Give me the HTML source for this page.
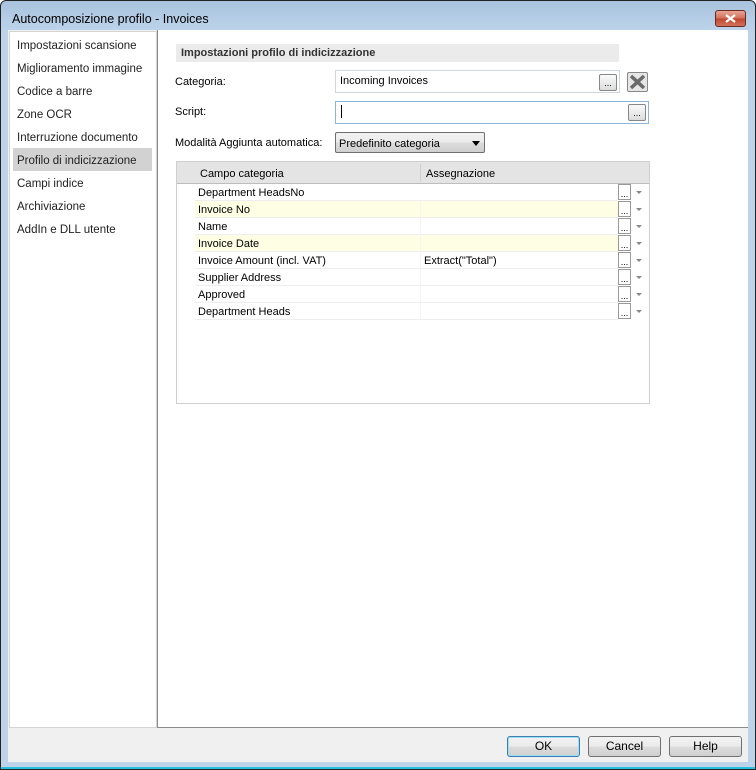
<!DOCTYPE html>
<html><head><style>
*{margin:0;padding:0;box-sizing:border-box}
body{width:756px;height:770px;background:#fff;font-family:"Liberation Sans",sans-serif;position:relative;overflow:hidden}
.a{position:absolute}
.win{left:0;top:0;width:756px;height:770px;border:1px solid #222;border-radius:6px 6px 0 0;background:linear-gradient(#a9c3de,#bcd3ea 30px,#bdd3ea)}
.t{font-size:12.5px;color:#000;white-space:nowrap;margin-top:1px}
.s{font-size:11px;color:#000;white-space:nowrap;margin-top:1px}
.li{left:17px;font-size:11.5px;color:#222;margin-top:2px}
.dots{border:1px solid #888;border-radius:2px;background:linear-gradient(#fafafa,#dcdcdc);font-size:9px;text-align:center;line-height:10px;color:#000}
.row{left:195px;width:423px;height:17px;border-bottom:1px solid #eee}
.rb{left:618px;width:13px;height:16px;border:1px solid #999;background:#fff;font-size:9px;text-align:center;line-height:18px}
.ar{left:636px;width:0;height:0;border-left:3px solid transparent;border-right:3px solid transparent;border-top:3px solid #888}
.btn{top:736px;height:21px;border:1px solid #707070;border-radius:3px;background:linear-gradient(#f2f2f2,#ebebeb 50%,#dddddd 50%,#cfcfcf);font-size:12px;text-align:center;line-height:19px}
</style></head><body>
<div class="a win"></div>
<div class="a t" style="left:12px;top:11px">Autocomposizione profilo - Invoices</div>
<div class="a" style="left:715px;top:10px;width:31px;height:17px;border:1px solid #6b2a20;border-radius:3px;background:linear-gradient(#e8a596,#d26d58 50%,#c0452f 50%,#d0705a)"><svg width="29" height="15" style="display:block"><path d="M10 4L19 11M19 4L10 11" stroke="#fff" stroke-width="2.2"/></svg></div>
<div class="a" style="left:8px;top:30px;width:740px;height:732px;background:#f0f0f0"></div>
<div class="a" style="left:9px;top:31px;width:148px;height:697px;background:#fff;border:1px solid #d4d4d4"></div>
<div class="a" style="left:157px;top:30px;width:591px;height:698px;background:#fff;border-left:1px solid #8a8a8a;border-bottom:1px solid #8a8a8a"></div>
<div class="a" style="left:13px;top:148px;width:139px;height:23px;background:#d2d2d2"></div>
<div class="a li" style="top:38px">Impostazioni scansione</div>
<div class="a li" style="top:61px">Miglioramento immagine</div>
<div class="a li" style="top:84px">Codice a barre</div>
<div class="a li" style="top:107px">Zone OCR</div>
<div class="a li" style="top:130px">Interruzione documento</div>
<div class="a li" style="top:153px">Profilo di indicizzazione</div>
<div class="a li" style="top:176px">Campi indice</div>
<div class="a li" style="top:199px">Archiviazione</div>
<div class="a li" style="top:222px">AddIn e DLL utente</div>

<div class="a" style="left:176px;top:44px;width:443px;height:18px;background:#ebebeb"></div>
<div class="a s" style="left:181px;top:46px;font-weight:bold;color:#333">Impostazioni profilo di indicizzazione</div>
<div class="a s" style="left:175px;top:75px">Categoria:</div>
<div class="a" style="left:335px;top:70px;width:285px;height:23px;border:1px solid #cfd6de;background:#fff"></div>
<div class="a s" style="left:340px;top:74px">Incoming Invoices</div>
<div class="a dots" style="left:599px;top:74px;width:18px;height:17px;line-height:17px">...</div>
<div class="a" style="left:627px;top:72px;width:21px;height:20px;border:1px solid #888;border-radius:2px;background:#e6e6e6"><svg width="19" height="18" style="display:block"><path d="M3 3L16 15M16 3L3 15" stroke="#6a6a6a" stroke-width="3.5"/></svg></div>
<div class="a s" style="left:175px;top:105px">Script:</div>
<div class="a" style="left:335px;top:101px;width:314px;height:23px;border:1px solid #8db5da;background:#fff"></div>
<div class="a" style="left:341px;top:105px;width:1px;height:13px;background:#000"></div>
<div class="a dots" style="left:628px;top:104px;width:18px;height:17px;line-height:17px">...</div>
<div class="a s" style="left:175px;top:136px">Modalità Aggiunta automatica:</div>
<div class="a" style="left:335px;top:132px;width:150px;height:21px;border:1px solid #707070;border-radius:2px;background:linear-gradient(#f2f2f2,#ebebeb 50%,#dddddd 50%,#cfcfcf)"></div>
<div class="a s" style="left:339px;top:137px">Predefinito categoria</div>
<div class="a ar" style="left:472px;top:141px;border-left-width:4px;border-right-width:4px;border-top:5px solid #000"></div>

<div class="a" style="left:176px;top:161px;width:474px;height:243px;border:1px solid #cfcfcf;background:#fff"></div>
<div class="a" style="left:177px;top:162px;width:472px;height:22px;background:#e4e4e4;border-bottom:1px solid #bdbdbd"></div>
<div class="a" style="left:420px;top:164px;width:1px;height:18px;background:#cfcfcf"></div>
<div class="a s" style="left:200px;top:167px">Campo categoria</div>
<div class="a s" style="left:426px;top:167px">Assegnazione</div>

<div class="a row" style="top:184px"></div>
<div class="a row" style="top:201px;background:#fefee4"></div>
<div class="a row" style="top:218px"></div>
<div class="a row" style="top:235px;background:#fefee4"></div>
<div class="a row" style="top:252px"></div>
<div class="a row" style="top:269px"></div>
<div class="a row" style="top:286px"></div>
<div class="a row" style="top:303px"></div>
<div class="a" style="left:420px;top:201px;width:1px;height:118px;background:#f4f4f4"></div>
<div class="a s" style="left:198px;top:186px">Department HeadsNo</div>
<div class="a s" style="left:198px;top:203px">Invoice No</div>
<div class="a s" style="left:198px;top:220px">Name</div>
<div class="a s" style="left:198px;top:237px">Invoice Date</div>
<div class="a s" style="left:198px;top:254px">Invoice Amount (incl. VAT)</div>
<div class="a s" style="left:424px;top:254px">Extract("Total")</div>
<div class="a s" style="left:198px;top:271px">Supplier Address</div>
<div class="a s" style="left:198px;top:288px">Approved</div>
<div class="a s" style="left:198px;top:305px">Department Heads</div>

<div class="a rb" style="top:184px">...</div><div class="a ar" style="top:191px"></div>
<div class="a rb" style="top:201px">...</div><div class="a ar" style="top:208px"></div>
<div class="a rb" style="top:218px">...</div><div class="a ar" style="top:225px"></div>
<div class="a rb" style="top:235px">...</div><div class="a ar" style="top:242px"></div>
<div class="a rb" style="top:252px">...</div><div class="a ar" style="top:259px"></div>
<div class="a rb" style="top:269px">...</div><div class="a ar" style="top:276px"></div>
<div class="a rb" style="top:286px">...</div><div class="a ar" style="top:293px"></div>
<div class="a rb" style="top:303px">...</div><div class="a ar" style="top:310px"></div>

<div class="a btn" style="left:507px;width:73px;border-color:#3c7fb1;box-shadow:inset 0 0 0 1px #9fdcf5">OK</div>
<div class="a btn" style="left:588px;width:73px">Cancel</div>
<div class="a btn" style="left:669px;width:73px">Help</div>
<div class="a" style="left:1px;top:767px;width:754px;height:2px;background:#27c1e0"></div>
</body></html>
